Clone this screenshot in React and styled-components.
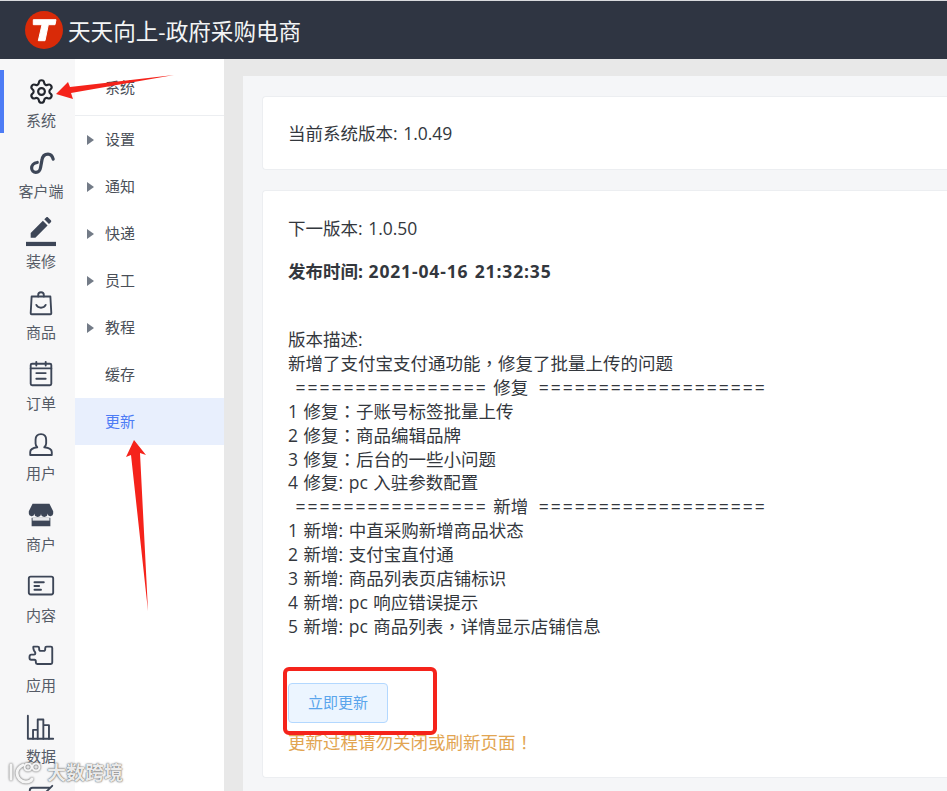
import React from "react";
import styled, { createGlobalStyle } from "styled-components";
import { Settings } from "lucide-react";

const Global = createGlobalStyle`
  html, body { margin: 0; padding: 0; background: #fff; }
  body { font-family: "Open Sans", "Noto Sans CJK SC", sans-serif; overflow: hidden; }
  * { box-sizing: border-box; }
`;

const Page = styled.div`
  position: relative;
  width: 947px;
  height: 791px;
  overflow: hidden;
  display: flex;
  flex-direction: column;
`;
const Header = styled.header`
  flex: 0 0 59px;
  background: #2f3542;
  border-top: 1px solid #d9dadd;
  display: flex;
  align-items: center;
  padding-left: 25px;
  gap: 5px;
`;
const Logo = styled.svg`
  width: 38px;
  height: 38px;
  flex: none;
`;
const Title = styled.h1`
  margin: 0;
  color: #f4f5f6;
  font-size: 22.6px;
  font-weight: 400;
  white-space: nowrap;
`;
const Body = styled.div`
  flex: 1;
  display: flex;
  min-height: 0;
`;
const Rail = styled.nav`
  flex: 0 0 75px;
  background: #f7f7f8;
  padding-top: 11px;
  overflow: hidden;
`;
const RailItem = styled.div`
  height: 70.67px;
  display: flex;
  flex-direction: column;
  align-items: center;
  padding: 6px 0 0 7px;
  background: ${(p) => (p.$active ? "linear-gradient(#4d7cf5, #4d7cf5) no-repeat 0 0 / 4px 63px" : "none")};
  color: #555b66;
  font-size: 15px;
  line-height: 20px;
`;
const RailIcon = styled.svg`
  width: 30px;
  height: 30px;
  flex: none;
  margin-bottom: 4px;
  color: #3d4657;
  overflow: visible;
`;
const GearBox = styled.span`
  width: 30px;
  height: 30px;
  flex: none;
  margin-bottom: 4px;
  display: flex;
  align-items: center;
  justify-content: center;
  color: #22262e;
`;
const Sub = styled.aside`
  flex: 0 0 149px;
  background: #fff;
`;
const SubHead = styled.div`
  height: 57px;
  border-bottom: 1px solid #eceef1;
  padding: 18px 0 0 30px;
  font-size: 15px;
  line-height: 20px;
  color: #4a4f58;
`;
const SubRow = styled.div`
  height: 47px;
  display: flex;
  align-items: center;
  padding: 0 0 2px 30px;
  position: relative;
  font-size: 15px;
  color: ${(p) => (p.$active ? "#4d7cf5" : "#4a4f58")};
  background: ${(p) => (p.$active ? "#e8effd" : "transparent")};
`;
const Caret = styled.i`
  position: absolute;
  left: 12px;
  top: 19px;
  width: 0;
  height: 0;
  border-left: 7px solid #737b87;
  border-top: 5px solid transparent;
  border-bottom: 5px solid transparent;
`;
const Main = styled.main`
  flex: 1;
  min-width: 0;
  background: #e8e8e8;
  padding: 17px 0 0 19px;
`;
const Inner = styled.div`
  height: 100%;
  background: #f5f6f8;
  padding: 20px 0 0 19px;
  display: flex;
  flex-direction: column;
  gap: 20px;
`;
const Card = styled.section`
  background: #fff;
  border: 1px solid #eceef1;
  border-right: none;
  border-radius: 4px 0 0 4px;
  padding-left: 25px;
  color: #33373d;
  font-size: 17.5px;
  word-spacing: 1px;
`;
const VersionCard = styled(Card)`
  height: 74px;
  display: flex;
  align-items: center;
  padding-bottom: 1px;
`;
const DetailCard = styled(Card)`
  height: 588px;
  padding-top: 25px;
`;
const Line = styled.div`
  line-height: 24px;
  white-space: pre;
`;
const TightLine = styled(Line)`
  line-height: 23.9px;
`;
const NextVersion = styled(Line)``;
const Published = styled(Line)`
  margin-top: 19px;
  font-weight: 700;
`;
const Stamp = styled.span`
  letter-spacing: 0.85px;
`;
const Notes = styled.div`
  margin-top: 45px;
`;
const Eq = styled.span`
  letter-spacing: 2px;
  margin-left: ${(p) => p.$gap}px;
`;
const Punct = styled.span`
  font-family: "Noto Sans CJK TC", sans-serif;
  line-height: 0;
`;
const UpdateButton = styled.button`
  display: block;
  margin-top: 44px;
  width: 100px;
  height: 40px;
  border: 1px solid #b3d8ff;
  border-radius: 4px;
  background: #ecf5ff;
  color: #5aa5ec;
  font: inherit;
  font-size: 15px;
  padding: 0 0 2px;
`;
const Warn = styled.div`
  margin-top: 7px;
  line-height: 24px;
  color: #e2a552;
`;
const Overlay = styled.svg`
  position: absolute;
  left: 0;
  top: 0;
  width: 947px;
  height: 791px;
  pointer-events: none;
`;
const Highlight = styled.div`
  position: absolute;
  left: 283px;
  top: 667px;
  width: 154px;
  height: 68px;
  border: 4px solid #f5231b;
  border-radius: 6px;
`;
const Watermark = styled.div`
  position: absolute;
  left: 8px;
  top: 759px;
  display: flex;
  align-items: center;
  gap: 5px;
  color: rgba(245, 245, 245, 0.95);
  font-size: 19px;
  line-height: 28px;
  font-weight: 700;
  text-shadow: 0 0 2px rgba(70, 70, 70, 0.85), 0 0 1px rgba(70, 70, 70, 0.7);
`;
const WatermarkLogo = styled.svg`
  width: 34px;
  height: 26px;
  filter: drop-shadow(0 0 1px rgba(60, 60, 60, 0.9));
`;

const S = { fill: "none", stroke: "currentColor", strokeWidth: 2, strokeLinecap: "round", strokeLinejoin: "round" };

const icons = {
  client: <path {...S} strokeWidth={3.4} d="M29 13C28 9 26 7.500 23.500 7.500 19.500 7.500 17.500 10 17 14L15.500 22C15 25.500 13 27 10.500 27 8 27 6 25 6 22.500 6 20 8 17 12 16.500" />,
  decorate: (
    <g fill="currentColor">
      <rect x="0" y="26.500" width="32" height="4.500" />
      <path d="M5 22v-5L18 4l5 5L10 22zM19.500 2.500l2-2c.6-.6 1.400-.6 2 0l3 3c.6.6.6 1.400 0 2l-2 2z" />
    </g>
  ),
  goods: (
    <g {...S}>
      <path d="M6 9h20l1 18a1 1 0 0 1-1 1H6a1 1 0 0 1-1-1z" />
      <path d="M13 9V7.500a3 3 0 0 1 6 0V9" />
      <path d="M11 18c2 4 8 4 10 0" />
    </g>
  ),
  order: (
    <g {...S}>
      <rect x="5" y="5" width="22" height="23" rx="1.500" />
      <path d="M5 10h22M11 3v4M21 3v4M11 15h10M11 21h10" />
    </g>
  ),
  user: (
    <path {...S} d="M16 5.500c3.500 0 5.500 2.500 5.500 6v4c0 2-1 3-2 4 4 .5 8 1.500 8 5v3.200H4.500v-3.200c0-3.500 4-4.500 7.500-5-1-1-1.800-2-1.800-4v-4c0-3.500 2-6 5.800-6z" />
  ),
  shop: (
    <g fill="currentColor">
      <path d="M7 4h18l4 8v2a3 3 0 0 1-6 .5 3.500 3.500 0 0 1-7 0 3.500 3.500 0 0 1-7 0 3 3 0 0 1-6-.5v-2z" />
      <path d="M6 19h20v9H6z" />
      <path d="M7 19h18v3H7z" fill="#e6e7ea" />
    </g>
  ),
  content: (
    <g {...S}>
      <rect x="3" y="6" width="26" height="19" rx="2" />
      <path d="M9 12h10M9 16h5M9 20h7" />
    </g>
  ),
  app: (
    <path {...S} d="M8 6h4.500c1 0 1.500.5 1.500 1.500v1c0 1 .5 2 1.500 2h3.500c1 0 1.500-1 1.500-2v-1c0-1 .5-1.500 1.500-1.500h4.500c1 0 1.500.5 1.500 1.500V23c0 1-.5 1.500-1.500 1.500H12c-1 0-1.500-.5-1.500-1.500v-1c0-1-.5-2-1.500-2H5.500c-1 0-1.800-1-1.800-2.500s.8-3 1.800-3h3c1 0 1.500-.5 1.500-1.500s-.6-1.500-1.300-2.500C7.800 9 7.500 6 8 6z" />
  ),
  data: (
    <g {...S}>
      <path d="M2 4v24.500h27" />
      <path d="M7.500 28.500V19h5v9.500M12.500 28.500V8h6v20.500M18.500 28.500V14h6v14.500" />
    </g>
  ),
  edit: (
    <g {...S}>
      <path d="M25 5H7a3 3 0 0 0-3 3v19h20V14M14 17L28 3" />
    </g>
  ),
};

const railItems = [
  ["系统", "gear", true],
  ["客户端", "client"],
  ["装修", "decorate"],
  ["商品", "goods"],
  ["订单", "order"],
  ["用户", "user"],
  ["商户", "shop"],
  ["内容", "content"],
  ["应用", "app"],
  ["数据", "data"],
  ["", "edit"],
];
const subItems = [["设置", true], ["通知", true], ["快递", true], ["员工", true], ["教程", true], ["缓存", false]];

const C = () => <Punct>，</Punct>;
const K = () => <Punct>：</Punct>;

export default function App() {
  return (
    <Page>
      <Global />
      <Header>
        <Logo viewBox="0 0 38 38">
          <circle cx="19" cy="19" r="19" fill="#d92a08" />
          <path d="M8.300 8.700H31L30 13.700H23.300L20 29.700H13.300L17 13.700H8.300z" fill="#fff" stroke="#fff" strokeWidth="1" strokeLinejoin="round" />
        </Logo>
        <Title>天天向上-政府采购电商</Title>
      </Header>
      <Body>
        <Rail>
          {railItems.map(([label, key, active]) => (
            <RailItem key={key} $active={active}>
              {key === "gear" ? (
                <GearBox>
                  <Settings size={27} strokeWidth={1.9} />
                </GearBox>
              ) : (
                <RailIcon viewBox="0 0 32 32">{icons[key]}</RailIcon>
              )}
              {label}
            </RailItem>
          ))}
        </Rail>
        <Sub>
          <SubHead>系统</SubHead>
          {subItems.map(([label, caret]) => (
            <SubRow key={label}>
              {caret && <Caret />}
              {label}
            </SubRow>
          ))}
          <SubRow $active>更新</SubRow>
        </Sub>
        <Main>
          <Inner>
            <VersionCard>当前系统版本: 1.0.49</VersionCard>
            <DetailCard>
              <NextVersion>下一版本: 1.0.50</NextVersion>
              <Published>发布时间: <Stamp>2021-04-16 21:32:35</Stamp></Published>
              <Notes>
                <TightLine>版本描述:</TightLine>
                <TightLine>新增了支付宝支付通功能<C />修复了批量上传的问题</TightLine>
                <TightLine> <Eq $gap={2}>================</Eq> 修复 <Eq $gap={5}>===================</Eq></TightLine>
                <TightLine>1 修复<K />子账号标签批量上传</TightLine>
                <TightLine>2 修复<K />商品编辑品牌</TightLine>
                <TightLine>3 修复<K />后台的一些小问题</TightLine>
                <TightLine>4 修复: pc 入驻参数配置</TightLine>
                <TightLine> <Eq $gap={2}>================</Eq> 新增 <Eq $gap={5}>===================</Eq></TightLine>
                <TightLine>1 新增: 中直采购新增商品状态</TightLine>
                <TightLine>2 新增: 支付宝直付通</TightLine>
                <TightLine>3 新增: 商品列表页店铺标识</TightLine>
                <TightLine>4 新增: pc 响应错误提示</TightLine>
                <TightLine>5 新增: pc 商品列表<C />详情显示店铺信息</TightLine>
              </Notes>
              <UpdateButton>立即更新</UpdateButton>
              <Warn>更新过程请勿关闭或刷新页面<Punct>！</Punct></Warn>
            </DetailCard>
          </Inner>
        </Main>
      </Body>
      <Overlay viewBox="0 0 947 791">
        <polygon points="174,75 70,87 68,82 56,94 73,99 71,93" fill="#f5231b" />
        <polygon points="134,440 146,455 140,453 148,611 131,455 126,457" fill="#f5231b" />
      </Overlay>
      <Highlight />
      <Watermark>
        <WatermarkLogo viewBox="0 0 34 26">
          <g fill="none" stroke="#f5f5f5" strokeWidth="3" strokeLinecap="round">
            <path d="M3 5v14" />
            <path d="M15 5c-4 2-6 5-6 8 0 5 4 9 9 9 3 0 5-1 6-3" />
            <circle cx="20" cy="7" r="3.500" strokeWidth="2" />
            <circle cx="28" cy="7" r="3.500" strokeWidth="2" />
          </g>
        </WatermarkLogo>
        大数跨境
      </Watermark>
    </Page>
  );
}
